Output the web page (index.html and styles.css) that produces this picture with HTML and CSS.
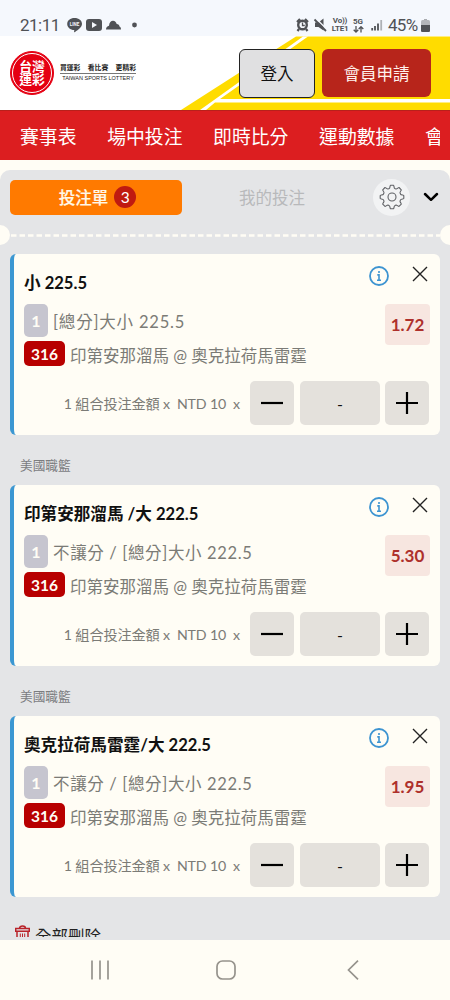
FILE: index.html
```html
<!DOCTYPE html>
<html lang="zh-Hant">
<head>
<meta charset="utf-8">
<title>台灣運彩</title>
<link rel="stylesheet" href="styles.css">
</head>
<body>
<div class="screen">
  <div class="status">
    <span class="clock">21:11</span>
    <svg class="status-left" width="74" height="20" viewBox="0 0 74 20">
      <path fill="#505256" d="M8.500 3c4.400 0 7.500 2.600 7.500 5.800 0 3.400-3.700 6-7 8.200-.700.500-1.100.200-.900-.6l.2-1.300C4.200 14.900 1.200 12.200 1.200 8.900 1.200 5.600 4.300 3 8.500 3z"/>
      <text x="8.500" y="10.800" text-anchor="middle" class="line-mark">LINE</text>
      <rect x="20" y="4" width="16" height="12" rx="3" fill="#505256"/>
      <path d="M26 7v6l5-3z" fill="#f5f8fd"/>
      <path d="M40 14.500c0-2.200 1.300-3.400 3-3.700.3-3.200 2-5 4-5 2 0 3.200 1.300 3.700 3.200 1.800.1 2.600 1.100 2.800 2.400 1 .4 1.500 1.500 1.500 3.100z" fill="#505256"/>
      <circle cx="68.500" cy="10" r="2.400" fill="#505256"/>
    </svg>
    <div class="status-right">
      <svg width="34" height="16" viewBox="0 0 34 16">
        <circle cx="6.500" cy="8" r="4.300" fill="none" stroke="#505256" stroke-width="2.400"/>
        <path d="M1 5l3-3M12 5L9 2M3 12l-1.500 2M10 12l1.500 2" stroke="#505256" stroke-width="2.200"/>
        <path d="M6.500 5.500v3h2.300" fill="none" stroke="#505256" stroke-width="1.300"/>
        <path d="M19 5.500h3.500L27.500 1.500v12l-5-3.500H19z" fill="#505256"/>
        <path d="M20 1.500l11 11" stroke="#f5f8fd" stroke-width="1.400"/>
        <path d="M18.500 2.500l11.500 11.500" stroke="#505256" stroke-width="1.800"/>
      </svg>
      <span class="net volte"><b>Vo))</b><b>LTE1</b></span>
      <span class="net five"><b>5G</b>
        <svg width="11" height="7" viewBox="0 0 11 7"><path d="M3 0v6M.700 3.700L3 6l2.300-2.300M8 6.500V.7M5.700 3L8 .7 10.300 3" fill="none" stroke="#505256" stroke-width="1.300"/></svg>
      </span>
      <svg class="signal" width="12" height="12" viewBox="0 0 12 12">
        <path d="M1.200 9v2.500M4 7v4.500M7 4.500v7" stroke="#505256" stroke-width="1.800"/>
        <path d="M10.200 1v10.500" stroke="#aeb1b5" stroke-width="1.800"/>
      </svg>
      <span class="pct">45%</span>
      <svg width="9" height="13" viewBox="0 0 9 13">
        <path d="M3 0h3v1H3z" fill="#aaacb0"/><rect y="1" width="9" height="12" rx="1.500" fill="#b4b6ba"/>
        <path d="M0 6h9v5.500q0 1.500-1.500 1.500h-6Q0 13 0 11.500z" fill="#505256"/>
      </svg>
    </div>
  </div>

  <header class="header">
    <svg class="stripes" width="450" height="74" viewBox="0 0 450 74">
      <path d="M296 .5h154V74H181z" fill="#ffdc00"/>
      <path d="M303 .5h5L220 63h230v3.500H215L206 74h-6z" fill="#fff"/>
    </svg>
    <div class="seal"><div class="seal-text"><span>台灣</span><span>運彩</span></div></div>
    <div class="slogan">
      <div class="slogan-zh"><span>買運彩</span><span>看比賽</span><span>更精彩</span></div>
      <div class="slogan-en">TAIWAN SPORTS LOTTERY</div>
    </div>
    <div class="login">登入</div>
    <div class="join">會員申請</div>
  </header>

  <nav class="nav"><div class="nav-clip"><span>賽事表</span><span>場中投注</span><span>即時比分</span><span>運動數據</span><span>會</span></div></nav>

  <main class="panel">
    <div class="tabs">
      <div class="tab-on">投注單<span class="count">3</span></div>
      <div class="tab-off">我的投注</div>
      <div class="gear">
        <svg width="26" height="26" viewBox="0 0 26 26" fill="none" stroke="#606266" stroke-width="1.100" stroke-linejoin="round">
          <path d="M11.400 1.200h3.200c.4 0 .3 2.800 1.100 3.200l1.300.5c.8.300 2.600-1.700 3-1.400l2.300 2.300c.3.400-1.600 2.300-1.300 3l.6 1.400c.3.800 3.200.8 3.200 1.200v3.200c0 .4-2.900.3-3.200 1.100l-.6 1.400c-.3.700 1.600 2.600 1.300 3L20 22.400c-.4.300-2.200-1.600-3-1.300l-1.300.6c-.8.300-.7 3.100-1.100 3.100h-3.200c-.4 0-.3-2.800-1.100-3.100L9 21.100c-.8-.3-2.600 1.600-3 1.300l-2.300-2.300c-.3-.4 1.600-2.300 1.300-3l-.6-1.400c-.3-.8-3.200-.7-3.200-1.100v-3.200c0-.4 2.900-.4 3.200-1.200L5 8.800c.3-.7-1.600-2.600-1.300-3L6 3.500c.4-.3 2.200 1.700 3 1.400l1.300-.5c.8-.4.7-3.200 1.100-3.200z"/>
          <circle cx="13" cy="13" r="4"/>
        </svg>
      </div>
      <svg class="chev" width="16" height="10" viewBox="0 0 16 10"><path d="M2 2l6 5.800L14 2" fill="none" stroke="#000" stroke-width="2.500" stroke-linecap="round" stroke-linejoin="round"/></svg>
    </div>
    <div class="tear"><i class="notch"></i><svg class="dash" width="430" height="3"><path d="M1 1.500h429" stroke="#fffdf5" stroke-width="2.600" stroke-dasharray="5.500 3"/></svg><i class="notch"></i></div>

    <section class="card">
      <div class="info">
        <h2 class="t1">小 225.5</h2>
        <div class="line"><b class="one">1</b><span class="m1">[總分]大小 225.5</span></div>
        <div class="line game"><b class="num">316</b><span class="teams">印第安那溜馬 @ 奧克拉荷馬雷霆</span></div>
      </div>
      <div class="side">
        <div class="acts">
          <svg width="20" height="20" viewBox="0 0 20 20"><circle cx="10" cy="10" r="9" fill="none" stroke="#3d94d1" stroke-width="1.800"/><path d="M10 5v2M8.300 8.900H10v5M8 14.200h4" fill="none" stroke="#3d94d1" stroke-width="1.600"/></svg>
          <svg class="x" width="16" height="16" viewBox="0 0 16 16"><path d="M1 1l14 14M15 1L1 15" stroke="#222" stroke-width="1.400"/></svg>
        </div>
        <div class="odds">1.72</div>
      </div>
      <div class="stake">
        <span class="cap">1 組合投注金額 x&nbsp; NTD 10&nbsp; x</span>
        <span class="btn"><svg width="22" height="22"><path d="M0 11h22" stroke="#000" stroke-width="2.200"/></svg></span>
        <span class="amount">-</span>
        <span class="btn plus"><svg width="22" height="22"><path d="M0 11h22M11 0v22" stroke="#000" stroke-width="2.200"/></svg></span>
      </div>
    </section>

    <h3 class="league">美國職籃</h3>
    <section class="card">
      <div class="info">
        <h2 class="t2">印第安那溜馬 /大 222.5</h2>
        <div class="line"><b class="one">1</b><span class="m2">不讓分 / [總分]大小 222.5</span></div>
        <div class="line game"><b class="num">316</b><span class="teams">印第安那溜馬 @ 奧克拉荷馬雷霆</span></div>
      </div>
      <div class="side">
        <div class="acts">
          <svg width="20" height="20" viewBox="0 0 20 20"><circle cx="10" cy="10" r="9" fill="none" stroke="#3d94d1" stroke-width="1.800"/><path d="M10 5v2M8.300 8.900H10v5M8 14.200h4" fill="none" stroke="#3d94d1" stroke-width="1.600"/></svg>
          <svg class="x" width="16" height="16" viewBox="0 0 16 16"><path d="M1 1l14 14M15 1L1 15" stroke="#222" stroke-width="1.400"/></svg>
        </div>
        <div class="odds">5.30</div>
      </div>
      <div class="stake">
        <span class="cap">1 組合投注金額 x&nbsp; NTD 10&nbsp; x</span>
        <span class="btn"><svg width="22" height="22"><path d="M0 11h22" stroke="#000" stroke-width="2.200"/></svg></span>
        <span class="amount">-</span>
        <span class="btn plus"><svg width="22" height="22"><path d="M0 11h22M11 0v22" stroke="#000" stroke-width="2.200"/></svg></span>
      </div>
    </section>

    <h3 class="league">美國職籃</h3>
    <section class="card">
      <div class="info">
        <h2 class="t3">奧克拉荷馬雷霆/大 222.5</h2>
        <div class="line"><b class="one">1</b><span class="m2">不讓分 / [總分]大小 222.5</span></div>
        <div class="line game"><b class="num">316</b><span class="teams">印第安那溜馬 @ 奧克拉荷馬雷霆</span></div>
      </div>
      <div class="side">
        <div class="acts">
          <svg width="20" height="20" viewBox="0 0 20 20"><circle cx="10" cy="10" r="9" fill="none" stroke="#3d94d1" stroke-width="1.800"/><path d="M10 5v2M8.300 8.900H10v5M8 14.200h4" fill="none" stroke="#3d94d1" stroke-width="1.600"/></svg>
          <svg class="x" width="16" height="16" viewBox="0 0 16 16"><path d="M1 1l14 14M15 1L1 15" stroke="#222" stroke-width="1.400"/></svg>
        </div>
        <div class="odds">1.95</div>
      </div>
      <div class="stake">
        <span class="cap">1 組合投注金額 x&nbsp; NTD 10&nbsp; x</span>
        <span class="btn"><svg width="22" height="22"><path d="M0 11h22" stroke="#000" stroke-width="2.200"/></svg></span>
        <span class="amount">-</span>
        <span class="btn plus"><svg width="22" height="22"><path d="M0 11h22M11 0v22" stroke="#000" stroke-width="2.200"/></svg></span>
      </div>
    </section>

    <div class="clear">
      <svg width="15" height="17" viewBox="0 0 15 17" fill="none" stroke="#b9232a" stroke-width="1.500"><path d="M.7 3.500h13.600v2.700H.7zM4.500 3.500c0-1.700 1.300-2.500 3-2.500s3 .8 3 2.500M2 6.200V16h11V6.200"/><path d="M5.300 8.500v6M7.500 8.500v6M9.700 8.500v6" stroke-width="1"/></svg>
      <span>全部刪除</span>
    </div>
  </main>

  <footer class="sysnav">
    <svg width="20" height="20" viewBox="0 0 20 20"><path d="M2 .5v19M10 .5v19M18 .5v19" stroke="#96938c" stroke-width="1.700"/></svg>
    <svg width="20" height="20" viewBox="0 0 20 20"><rect x="1" y="1" width="18" height="18" rx="5.500" fill="none" stroke="#96938c" stroke-width="1.700"/></svg>
    <svg width="12" height="20" viewBox="0 0 12 20"><path d="M11 .7L1.500 10l9.500 9.300" fill="none" stroke="#96938c" stroke-width="1.700"/></svg>
  </footer>
</div>
</body>
</html>
```
FILE: styles.css
```css
* { box-sizing: border-box; }
body { margin: 0; font-family: Lato, "Noto Sans CJK TC", sans-serif; background: #fffdf5; }
svg { display: block; flex: none; }
h2, h3 { margin: 0; }
.screen { width: 450px; height: 1000px; overflow: hidden; display: flex; flex-direction: column; white-space: nowrap; }

.status { height: 36px; flex: none; background: #f5f8fd; display: flex; align-items: flex-start; padding: 15px 20px 0 20px; color: #505256; font-family: Roboto, sans-serif; }
.clock { font-size: 17px; line-height: 21px; width: 46px; letter-spacing: -.5px; }
.line-mark { font: 700 4.500px Roboto, sans-serif; fill: #f5f8fd; }
.status-right { margin-left: auto; display: flex; align-items: center; height: 20px; }
.net { display: flex; flex-direction: column; align-items: center; font-size: 8px; line-height: 8px; }
.net b { font-weight: 700; }
.volte { margin-left: 1px; width: 18px; letter-spacing: -.2px; }
.five { margin-left: 3px; width: 12px; }
.signal { margin-left: 7px; }
.pct { font-size: 17px; margin-left: 5px; width: 33px; letter-spacing: -.7px; }

.header { height: 74px; flex: none; background: #fff; position: relative; display: flex; padding-left: 10px; }
.stripes { position: absolute; left: 0; top: 0; }
.header > div { position: relative; }
.seal { margin-top: 15px; width: 44px; height: 44px; border-radius: 50%; background: #e50012; border: 1px solid #e50012; padding: 1px; display: flex; }
.seal-text { flex: 1; border: 1px solid #fff; border-radius: 50%; color: #fff; font-size: 12.800px; line-height: 13.500px; font-weight: 700; display: flex; flex-direction: column; align-items: center; justify-content: center; }
.slogan { margin: 27px 0 0 6px; width: 76px; color: #222; }
.slogan-zh { display: flex; justify-content: space-between; font-size: 6.800px; line-height: 9px; font-weight: 700; height: 11px; border-bottom: 1px solid #777; }
.slogan-en { font: 5.500px/9px "Liberation Sans", sans-serif; text-align: center; }
.login { margin: 13px 0 0 103px; width: 76px; height: 49px; border: 1.500px solid #222; border-radius: 6px; background: #e0e0e1; color: #111; font-size: 16.500px; line-height: 48px; text-align: center; }
.join { margin: 13px 0 0 7px; width: 109px; height: 48px; border-radius: 6px; background: #b7251b; color: #fff2ed; font-size: 16.500px; line-height: 50px; text-align: center; }

.nav { height: 49.500px; flex: none; background: #dc1e20; border-top: 1px solid #b8201b; color: #fff; padding: 0 10px 0 20px; }
.nav-clip { overflow: hidden; display: flex; gap: 30.600px; font-size: 18.850px; line-height: 51px; height: 48px; }

.panel { margin-top: 10px; height: 767px; flex: none; background: #e4e5e7; border-radius: 10px 10px 0 0; box-shadow: 0 4px 0 #e4e5e7; overflow: hidden; }
.tabs { display: flex; align-items: center; height: 35.500px; margin-top: 10px; padding-left: 10px; }
.tab-on { width: 172px; height: 35px; border-radius: 5px; background: #ff7a00; color: #fff8e8; font-size: 16.500px; font-weight: 500; -webkit-text-stroke: .2px #fff8e8; display: flex; justify-content: center; align-items: center; gap: 6px; padding-left: 3px; }
.count { width: 22px; height: 22px; border-radius: 50%; background: #c01a10; font: 15.500px/22px Lato, sans-serif; -webkit-text-stroke: 0; text-align: center; color: #fff; }
.tab-off { width: 180px; text-align: center; font-size: 16.500px; color: #b8b9bb; }
.gear { width: 37px; height: 37px; border-radius: 50%; background: #f2f3f4; display: grid; place-items: center; margin-left: 11px; }
.chev { margin-left: 13px; }
.tear { height: 20px; margin: 10px -10px 0; display: flex; align-items: center; justify-content: space-between; }
.notch { width: 20px; height: 20px; border-radius: 50%; background: #fffdf5; }

.card { margin: 0 10px; height: 181.500px; background: #fffdf5; border-left: 4px solid #3b97d2; border-radius: 6px; display: grid; grid-template-columns: 1fr 82px; grid-template-rows: 127.500px 44px; }
.tear + .card { margin-top: 8.500px; }
.info { padding: 17.500px 0 0 10px; }
.info h2 { font-size: 16.600px; line-height: 24px; height: 32px; font-weight: 700; color: #111; }
.line { display: flex; align-items: center; height: 34px; gap: 5px; font-size: 16.500px; color: #7b7b76; }
.line span { padding-top: 2px; }
.game { height: 33px; }
.game span { padding-top: 2px; }
.one { width: 24px; height: 33px; border-radius: 5px; background: #c6c5cf; color: #fffdf5; font-size: 16px; line-height: 34px; text-align: center; }
.num { width: 41px; height: 25px; border-radius: 5px; background: #b80000; color: #fffdf5; font-size: 15.500px; line-height: 26px; text-align: center; }
.m1 { letter-spacing: .8px; }
.m2 { letter-spacing: .64px; }
.side { padding: 12.500px 10px 0 0; }
.acts { display: flex; gap: 23px; padding-left: 11px; height: 38px; }
.odds { margin-left: 27px; width: 45px; height: 41px; border-radius: 4px; background: #f7e6e0; color: #ae302b; font-size: 17px; font-weight: 700; line-height: 42px; text-align: center; }
.stake { grid-column: 1 / 3; display: flex; align-items: center; justify-content: flex-end; padding-right: 11px; }
.cap { font-size: 14.200px; letter-spacing: -.15px; color: #7b7b76; margin-right: 10px; padding-bottom: 1px; }
.btn, .amount { width: 44px; height: 44px; border-radius: 5px; background: #e4e1dc; display: grid; place-items: center; }
.amount { width: 80px; margin: 0 5px 0 6px; font-size: 16px; color: #111; }
.league { height: 49.500px; padding: 18px 0 0 20px; font-size: 12.700px; line-height: 24px; font-weight: 400; color: #7b7c7f; }
.clear { display: flex; align-items: flex-start; gap: 5px; padding: 28px 0 0 15px; font-size: 16.500px; line-height: 24px; color: #222; }

.sysnav { margin-top: 3.500px; height: 60px; flex: none; background: #fffdf5; display: flex; align-items: center; padding-left: 90px; }
.sysnav svg + svg { margin-left: 106px; }
.sysnav svg:last-child { margin-left: 111px; }
```
